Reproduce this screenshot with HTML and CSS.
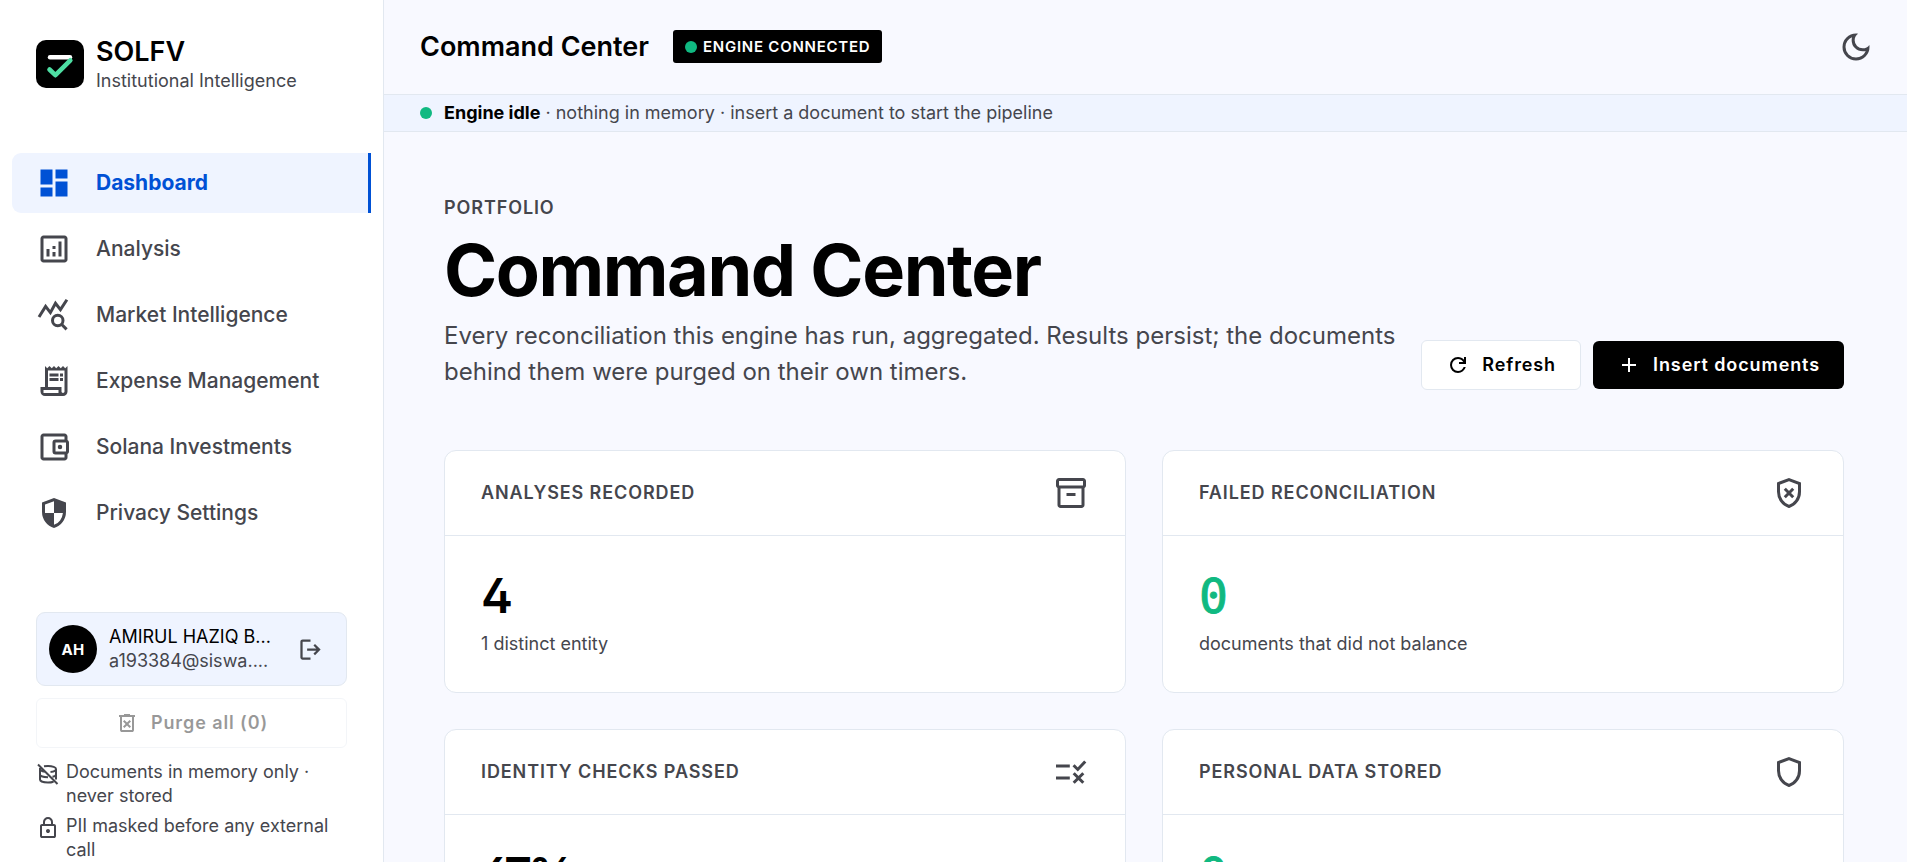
FILE: index.html
```html
<!DOCTYPE html>
<html lang="en">
<head>
    <meta charset="UTF-8">
    <meta name="viewport" content="width=device-width, initial-scale=1.0">
    <title>SOLFV - Command Center</title>
    <link rel="stylesheet" href="styles.css">
</head>
<body>

<div class="app">
    <aside class="sidebar">
        <div class="brand">
            <svg class="brand-logo" viewBox="0 0 48 48">
                <rect width="48" height="48" rx="10" fill="#000"/>
                <path d="M14 17.2h20" fill="none" stroke="#fff" stroke-width="4.4" stroke-linecap="round"/>
                <path d="M13.5 29.5l5.9 5.7L34.3 20.3" fill="none" stroke="#4edea3" stroke-width="4.6" stroke-linecap="round" stroke-linejoin="round"/>
            </svg>
            <div>
                <div class="brand-name">SOLFV</div>
                <div class="brand-tag">Institutional Intelligence</div>
            </div>
        </div>

        <nav class="nav">
            <a class="nav-item active">
                <svg class="icon" viewBox="0 0 24 24"><path d="M13 9V3h8v6zM3 13V3h8v10zm10 8V11h8v10zM3 21v-6h8v6z"/></svg>
                Dashboard
            </a>
            <a class="nav-item">
                <svg class="icon" viewBox="0 0 24 24"><path d="M7 12h2v5H7zM15 7h2v10h-2zM11 14h2v3h-2zM11 10h2v2h-2zM5 21q-.825 0-1.412-.587T3 19V5q0-.825.588-1.412T5 3h14q.825 0 1.413.588T21 5v14q0 .825-.587 1.413T19 21H5Zm0-2h14V5H5v14Z" fill-rule="evenodd"/></svg>
                Analysis
            </a>
            <a class="nav-item">
                <svg class="icon line" viewBox="0 0 24 24"><path d="M2 13.3L6.4 6.3l3.2 4.1L13 4.2l3.3 4.2 4.3-6.6"/><circle cx="14.5" cy="15.7" r="3.5"/><path d="M17 18.2l3.4 3.4"/></svg>
                Market Intelligence
            </a>
            <a class="nav-item">
                <svg class="icon" viewBox="0 0 24 24"><path d="M6 22q-1.25 0-2.125-.875T3 19v-3h3V2l1.5 1.5L9 2l1.5 1.5L12 2l1.5 1.5L15 2l1.5 1.5L18 2l1.5 1.5L21 2v17q0 1.25-.875 2.125T18 22H6Zm12-2q.425 0 .713-.288T19 19V5H8v11h9v3q0 .425.288.713T18 20ZM9 9V7h6v2H9Zm0 3v-2h6v2H9Zm7-3V7h2v2h-2Zm0 3v-2h2v2h-2ZM5 20h10v-2H5v2Z" fill-rule="evenodd"/></svg>
                Expense Management
            </a>
            <a class="nav-item">
                <svg class="icon" viewBox="0 0 24 24"><path d="M5 19V5h14v2h-6q-1 0-1.500.5T11 9v6q0 1 .5 1.500T13 17h6v2H5Zm0 2h14q.825 0 1.413-.587T21 19v-2.300q1-.5 1-1.700V9q0-1.200-1-1.700V5q0-.825-.587-1.412T19 3H5q-.825 0-1.412.588T3 5v14q0 .825.588 1.413T5 21Zm8-6V9h7v6h-7Z" fill-rule="evenodd"/><circle cx="16" cy="12" r="1.5"/></svg>
                Solana Investments
            </a>
            <a class="nav-item">
                <svg class="icon" viewBox="0 0 24 24"><path d="M12 22q-3.475-.875-5.737-3.987T4 11.1V5l8-3 8 3v6.1q0 3.8-2.262 6.913T12 22Zm0-2.100q2.425-.750 4.050-2.963T17.950 12H12V4.125l-6 2.250v5.175q0 .175.05.45H12v7.900Z" fill-rule="evenodd"/></svg>
                Privacy Settings
            </a>
        </nav>

        <div class="sidebar-footer">
            <div class="user">
                <div class="avatar">AH</div>
                <div class="user-text">
                    <div class="user-name">AMIRUL HAZIQ B...</div>
                    <div class="user-mail">a193384@siswa....</div>
                </div>
                <button class="logout">
                    <svg class="icon" viewBox="0 0 24 24"><path d="M5 21q-.825 0-1.412-.587T3 19V5q0-.825.588-1.412T5 3h7v2H5v14h7v2H5Zm11-4l-1.375-1.450L17.175 13H9v-2h8.175l-2.550-2.550L16 7l5 5-5 5Z"/></svg>
                </button>
            </div>
            <button class="btn btn-outline purge" disabled>
                <svg class="icon" viewBox="0 0 24 24"><path d="M9.400 17l2.600-2.600 2.600 2.600 1.400-1.400-2.600-2.600L16 10.400 14.600 9 12 11.600 9.400 9 8 10.400l2.600 2.600L8 15.600 9.400 17ZM7 21q-.825 0-1.412-.587T5 19V6H4V4h5V3h6v1h5v2h-1v13q0 .825-.587 1.413T17 21H7ZM17 6H7v13h10V6Z" fill-rule="evenodd"/></svg>
                Purge all (0)
            </button>
            <div class="notes">
                <div class="note">
                    <svg class="icon line" viewBox="0 0 24 24"><path d="M2 2.500L21.500 22M8 4.300Q9.800 4 12 4c4.500 0 8 1.400 8 3s-2.200 2.600-5.500 2.900M4 6v11.500c0 1.700 3.600 3 8 3 2 0 4-.3 5.500-.8M20 7v10.500M4 7c0 1.200 2 2.300 5 2.800M4 12.500c0 1.500 3.500 2.800 8 2.800M16.500 14.800c2.200-.5 3.500-1.300 3.500-2.300"/></svg>
                    <span>Documents in memory only · never stored</span>
                </div>
                <div class="note">
                    <svg class="icon" viewBox="0 0 24 24"><path d="M6 22q-.825 0-1.412-.587T4 20V10q0-.825.588-1.412T6 8h1V6q0-2.075 1.463-3.537T12 1q2.075 0 3.538 1.463T17 6v2h1q.825 0 1.413.588T20 10v10q0 .825-.587 1.413T18 22H6Zm0-2h12V10H6v10Zm6-3q.825 0 1.413-.587T14 15q0-.825-.587-1.412T12 13q-.825 0-1.412.588T10 15q0 .825.588 1.413T12 17ZM9 8h6V6q0-1.250-.875-2.125T12 3q-1.250 0-2.125.875T9 6v2Z" fill-rule="evenodd"/></svg>
                    <span>PII masked before any external call</span>
                </div>
            </div>
        </div>
    </aside>

    <div class="main">
        <header class="topbar">
            <span class="topbar-title">Command Center</span>
            <span class="badge"><i class="dot"></i>ENGINE CONNECTED</span>
            <button class="theme-toggle">
                <svg class="icon" viewBox="0 0 24 24"><path d="M12 21q-3.750 0-6.375-2.625T3 12q0-3.750 2.625-6.375T12 3q.350 0 .688.025t.662.075q-1.025.725-1.637 1.888T11.100 7.500q0 2.250 1.575 3.825T16.500 12.900q1.375 0 2.525-.613T20.900 10.650q.050.325.075.663T21 12q0 3.750-2.625 6.375T12 21Zm0-2q2.200 0 3.950-1.213T18.500 14.625q-.5.125-1 .2t-1 .075q-3.075 0-5.238-2.163T9.100 7.500q0-.5.075-1t.2-1Q7.425 6.300 6.213 8.050T5 12q0 2.900 2.050 4.950T12 19Z"/></svg>
            </button>
        </header>
        <div class="status">
            <i class="dot"></i>
            <span><strong>Engine idle</strong> · nothing in memory · insert a document to start the pipeline</span>
        </div>

        <main class="content">
            <div class="page-head">
                <div class="page-intro">
                    <div class="eyebrow">PORTFOLIO</div>
                    <h1>Command Center</h1>
                    <p>Every reconciliation this engine has run, aggregated. Results persist; the documents behind them were purged on their own timers.</p>
                </div>
                <div class="actions">
                    <button class="btn btn-outline">
                        <svg class="icon" viewBox="0 0 24 24"><path d="M12 20q-3.350 0-5.675-2.325T4 12q0-3.350 2.325-5.675T12 4q1.725 0 3.300.713T18 6.750V4h2v7h-7V9h4.200q-.8-1.400-2.187-2.200T12 6Q9.500 6 7.750 7.750T6 12q0 2.500 1.750 4.250T12 18q1.925 0 3.475-1.100T17.650 14h2.100q-.7 2.650-2.850 4.325T12 20Z"/></svg>
                        Refresh
                    </button>
                    <button class="btn btn-primary">
                        <svg class="icon" viewBox="0 0 24 24"><path d="M11 13H5v-2h6V5h2v6h6v2h-6v6h-2z"/></svg>
                        Insert documents
                    </button>
                </div>
            </div>

            <div class="cards">
                <section class="card">
                    <div class="card-head">
                        <h2>ANALYSES RECORDED</h2>
                        <svg class="icon" viewBox="0 0 24 24"><path d="M3 20V8.725q-.450-.275-.725-.712T2 7V4q0-.825.588-1.412T4 2h16q.825 0 1.413.588T22 4v3q0 .575-.275 1.013T21 8.725V20q0 .825-.587 1.413T19 22H5q-.825 0-1.412-.587T3 20ZM5 9v11h14V9H5ZM4 7h16V4H4v3Zm5 7h6v-2H9v2Z" fill-rule="evenodd"/></svg>
                    </div>
                    <div class="card-body">
                        <div class="value">4</div>
                        <div class="caption">1 distinct entity</div>
                    </div>
                </section>
                <section class="card">
                    <div class="card-head">
                        <h2>FAILED RECONCILIATION</h2>
                        <svg class="icon line" viewBox="0 0 24 24"><path d="M12 3.070l7 2.620v5.410c0 4.600-2.900 8.700-7 9.860-4.100-1.160-7-5.260-7-9.860V5.690zM9.200 9.200l5.600 5.600M14.800 9.200l-5.600 5.600"/></svg>
                    </div>
                    <div class="card-body">
                        <div class="value ok">0</div>
                        <div class="caption">documents that did not balance</div>
                    </div>
                </section>
                <section class="card">
                    <div class="card-head">
                        <h2>IDENTITY CHECKS PASSED</h2>
                        <svg class="icon line" viewBox="0 0 24 24"><path d="M2 8h9.200M2 16h9.200M13.700 7.500l2.800 2.800 5-5.300M13.800 12.800l6.400 6.400M20.200 12.800l-6.400 6.400"/></svg>
                    </div>
                    <div class="card-body">
                        <div class="value">67%</div>
                    </div>
                </section>
                <section class="card">
                    <div class="card-head">
                        <h2>PERSONAL DATA STORED</h2>
                        <svg class="icon line" viewBox="0 0 24 24"><path d="M12 3.070l7 2.620v5.410c0 4.600-2.900 8.700-7 9.860-4.100-1.160-7-5.260-7-9.860V5.690z"/></svg>
                    </div>
                    <div class="card-body">
                        <div class="value ok">0</div>
                    </div>
                </section>
            </div>
        </main>
    </div>
</div>

</body>
</html>
```
FILE: styles.css
```css
* {
    box-sizing: border-box;
}
body {
    margin: 0;
    font-family: Inter, "Liberation Sans", sans-serif;
    font-size: 18px;
    line-height: 24px;
    color: #45464d;
    background: #f8f9ff;
    overflow: hidden;
}
button {
    font: inherit;
    color: inherit;
    border: none;
    background: none;
    padding: 0;
}
.icon {
    width: 36px;
    height: 36px;
    flex-shrink: 0;
    display: block;
    fill: currentColor;
}
.icon.line {
    fill: none;
    stroke: currentColor;
    stroke-width: 2;
}
.dot {
    width: 12px;
    height: 12px;
    border-radius: 50%;
    background: #10b981;
    flex-shrink: 0;
}
.app {
    display: flex;
    height: 100vh;
    overflow: hidden;
}

/* sidebar */
.sidebar {
    width: 384px;
    flex-shrink: 0;
    background: #fff;
    border-right: 1px solid #e2e8f0;
}
.brand {
    display: flex;
    align-items: center;
    gap: 12px;
    padding: 34px 36px 0;
    height: 94px;
}
.brand-logo {
    width: 48px;
    height: 48px;
}
.brand-name {
    font-size: 27px;
    font-weight: 600;
    line-height: 34px;
    color: #000;
}
.brand-tag {
    line-height: 24px;
}
.nav {
    display: flex;
    flex-direction: column;
    gap: 6px;
    padding: 59px 12px 0;
}
.nav-item {
    display: flex;
    align-items: center;
    gap: 24px;
    height: 60px;
    padding: 0 24px;
    font-size: 21px;
    font-weight: 500;
}
.nav-item.active {
    color: #0051d5;
    font-weight: 700;
    background: #eff4ff;
    border-right: 3px solid #0051d5;
    border-radius: 9px 0 0 9px;
}
.sidebar-footer {
    display: flex;
    flex-direction: column;
    gap: 12px;
    padding: 69px 36px 0;
}
.user {
    display: flex;
    align-items: center;
    gap: 12px;
    padding: 12px;
    background: #eff4ff;
    border: 1px solid #e2e8f0;
    border-radius: 9px;
}
.avatar {
    width: 48px;
    height: 48px;
    border-radius: 50%;
    background: #000;
    color: #fff;
    font-size: 15px;
    font-weight: 700;
    letter-spacing: 0.02em;
    line-height: 49px;
    text-align: center;
    flex-shrink: 0;
}
.user-text {
    flex: 1;
    min-width: 0;
    white-space: nowrap;
}
.user-name {
    color: #000;
}
.logout {
    width: 48px;
    height: 48px;
    display: flex;
    align-items: center;
    justify-content: center;
}
.logout .icon {
    width: 27px;
    height: 27px;
}
.notes {
    display: flex;
    flex-direction: column;
    gap: 6px;
}
.note {
    display: flex;
    gap: 6px;
}
.note .icon {
    width: 24px;
    height: 24px;
    margin-top: 2px;
}

/* buttons */
.btn {
    display: flex;
    align-items: center;
    justify-content: center;
    gap: 12px;
    padding: 12px 24px;
    font-weight: 600;
    letter-spacing: 0.05em;
    border-radius: 6px;
    white-space: nowrap;
}
.btn .icon {
    width: 24px;
    height: 24px;
}
.btn-outline {
    color: #000;
    background: #fff;
    border: 1px solid #e2e8f0;
}
.btn-primary {
    color: #fff;
    background: #000;
}
.purge {
    opacity: 0.4;
}

/* top bar */
.main {
    flex: 1;
    min-width: 0;
}
.topbar {
    display: flex;
    align-items: center;
    height: 95px;
    padding: 0 33px 0 36px;
    border-bottom: 1px solid #e2e8f0;
}
.topbar-title {
    font-size: 27px;
    font-weight: 600;
    color: #000;
    margin-right: 24px;
}
.badge {
    display: flex;
    align-items: center;
    gap: 6px;
    height: 33px;
    margin-bottom: 1px;
    padding: 0 12px;
    font-size: 15px;
    font-weight: 600;
    letter-spacing: 0.05em;
    color: #fff;
    background: #000;
    border-radius: 3px;
}
.theme-toggle {
    margin-left: auto;
}
.status {
    display: flex;
    align-items: center;
    gap: 12px;
    height: 37px;
    padding: 0 36px;
    background: #eff4ff;
    border-bottom: 1px solid #e2e8f0;
}
.status strong {
    color: #000;
}

/* page */
.content {
    width: 1460px;
    padding: 60px 0 0 60px;
}
.page-head {
    display: flex;
    align-items: flex-end;
    justify-content: space-between;
    gap: 24px;
    margin-bottom: 60px;
}
.eyebrow {
    padding-top: 2px;
    font-weight: 600;
    line-height: 28px;
    letter-spacing: 0.05em;
}
h1 {
    margin: 0;
    font-size: 72px;
    line-height: 96px;
    font-weight: 700;
    letter-spacing: -0.02em;
    color: #000;
}
.page-intro p {
    margin: 0;
    font-size: 24px;
    line-height: 36px;
}
.actions {
    display: flex;
    align-items: center;
    gap: 12px;
}
.cards {
    display: grid;
    grid-template-columns: 1fr 1fr;
    gap: 36px;
}
.card {
    background: #fff;
    border: 1px solid #e2e8f0;
    border-radius: 12px;
}
.card-head {
    display: flex;
    align-items: center;
    justify-content: space-between;
    padding: 24px 36px;
    border-bottom: 1px solid #e2e8f0;
}
.card-head h2 {
    margin: 0;
    font-size: 18px;
    font-weight: 600;
    letter-spacing: 0.05em;
}
.card-body {
    padding: 36px;
}
.value {
    font-size: 48px;
    font-weight: 600;
    line-height: 48px;
    letter-spacing: -0.08em;
    font-feature-settings: "ss01", "cv02", "cv03";
    margin-bottom: 12px;
    color: #000;
}
.value.ok {
    font-family: "DejaVu Sans Mono", monospace;
    font-weight: 400;
    letter-spacing: 0;
    -webkit-text-stroke: 1px #10b981;
    color: #10b981;
}
```
